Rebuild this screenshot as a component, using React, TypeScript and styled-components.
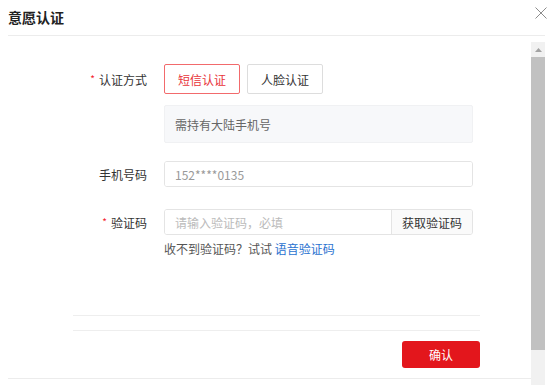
import React from 'react';
import styled, { createGlobalStyle } from 'styled-components';

const GlobalStyle = createGlobalStyle`
  html, body {
    margin: 0;
    padding: 0;
    background: #ffffff;
    overflow: hidden;
  }
  body {
    font-family: "Noto Sans CJK SC", "Noto Sans", sans-serif;
    font-size: 12px;
    color: #333333;
  }
`;

// Dialog shell
const Dialog = styled.div`
  width: 545px;
  height: 385px;
  padding-left: 8px;
  box-sizing: border-box;
  display: flex;
  flex-direction: column;
`;

const Header = styled.div`
  height: 35px;
  flex: none;
  display: flex;
  align-items: center;
  justify-content: space-between;
  border-bottom: 1px solid #ececec;
`;

const Title = styled.h3`
  margin: -1px 0 0;
  font-size: 14px;
  font-weight: 700;
  color: #222222;
  line-height: 20px;
`;

const CloseButton = styled.button`
  border: 0;
  background: none;
  padding: 0;
  margin: -10px -2px 0 0;
  width: 12px;
  height: 12px;
  display: flex;
  cursor: pointer;
`;

// Body with its scrollbar column
const Body = styled.div`
  margin-top: 6px;
  flex: 1;
  min-height: 0;
  display: flex;
  overflow: hidden;
`;

const Scroller = styled.div`
  flex: 1;
  min-width: 0;
`;

const ScrollBar = styled.div`
  width: 14px;
  flex: none;
  background: #f1f1f1;
  display: flex;
  flex-direction: column;
`;

const ScrollArrow = styled.div`
  height: 15px;
  flex: none;
  display: flex;
  align-items: center;
  justify-content: center;
`;

const ScrollThumb = styled.div`
  height: 293px;
  flex: none;
  background: #c1c1c1;
`;

const Content = styled.div`
  border-bottom: 1px solid #ececec;
`;

const Form = styled.div`
  padding-top: 22px;
  height: 273px;
  box-sizing: border-box;
  display: flex;
  flex-direction: column;
`;

const Row = styled.div<{ $gap: number }>`
  display: grid;
  grid-template-columns: 139px 309px;
  column-gap: 17px;
  margin-bottom: ${p => p.$gap}px;
`;

const Label = styled.div<{ $h: number }>`
  height: ${p => p.$h}px;
  display: flex;
  align-items: center;
  justify-content: flex-end;
  color: #333333;
`;

const Star = styled.span`
  color: #f5222d;
  font-size: 10px;
  margin-right: 4px;
  position: relative;
  top: -1px;
`;

const Control = styled.div`
  display: flex;
  flex-direction: column;
`;

const MethodGroup = styled.div`
  display: flex;
  gap: 7px;
`;

const MethodButton = styled.button<{ $active?: boolean }>`
  width: 76px;
  height: 30px;
  box-sizing: border-box;
  border: 1px solid ${p => (p.$active ? '#f26a6c' : '#dddddd')};
  border-radius: 2px;
  background: #ffffff;
  color: ${p => (p.$active ? '#e8343a' : '#333333')};
  font-family: inherit;
  font-size: 12px;
  padding: 0;
  cursor: pointer;
`;

const InfoBox = styled.div`
  margin-top: 11px;
  height: 38px;
  box-sizing: border-box;
  border: 1px solid #f0f1f3;
  border-radius: 2px;
  background: #f7f8fa;
  color: #666666;
  padding-left: 10px;
  display: flex;
  align-items: center;
`;

const InputBox = styled.div`
  height: 26px;
  box-sizing: border-box;
  border: 1px solid #e4e4e4;
  border-radius: 3px;
  display: flex;
  overflow: hidden;
`;

const Input = styled.input`
  flex: 1;
  min-width: 0;
  border: 0;
  outline: none;
  padding: 0 10px;
  font-family: inherit;
  font-size: 12px;
  color: #999999;
  background: #ffffff;

  &::placeholder {
    color: #bbbbbb;
  }
`;

const AddonButton = styled.button`
  width: 81px;
  flex: none;
  border: 0;
  border-left: 1px solid #e4e4e4;
  background: #fafafa;
  color: #333333;
  font-family: inherit;
  font-size: 12px;
  padding: 0;
  cursor: pointer;
`;

const Hint = styled.div`
  margin-top: 5px;
  color: #555555;
  line-height: 17px;
`;

const HintLink = styled.a`
  color: #2a72d0;
  text-decoration: none;
  cursor: pointer;
`;

// Footer
const Divider = styled.div`
  margin: 0 51px 0 65px;
  border-top: 1px solid #eeeeee;
  height: 14px;
`;

const Footer = styled.div`
  margin: 0 51px 0 65px;
  border-top: 1px solid #eeeeee;
  padding: 10px 0;
  display: flex;
  justify-content: flex-end;
`;

const ConfirmButton = styled.button`
  width: 78px;
  height: 27px;
  border: 0;
  border-radius: 3px;
  background: #e3161c;
  color: #ffffff;
  font-family: inherit;
  font-size: 12px;
  padding: 0;
  cursor: pointer;
`;

const CloseIcon = () => (
  <svg width="12" height="12" viewBox="0 0 12 12">
    <path d="M0.5 0.5 L11.5 11.5 M11.5 0.5 L0.5 11.5" stroke="#8c8c8c" strokeWidth="1" fill="none" />
  </svg>
);

const UpArrow = () => (
  <svg width="7" height="4" viewBox="0 0 7 4">
    <path d="M0 4 L3.5 0 L7 4 Z" fill="#a3a3a3" />
  </svg>
);

const App: React.FC = () => {
  return (
    <>
      <GlobalStyle />
      <Dialog>
        <Header>
          <Title>意愿认证</Title>
          <CloseButton aria-label="关闭">
            <CloseIcon />
          </CloseButton>
        </Header>
        <Body>
          <Scroller>
            <Content>
              <Form>
                <Row $gap={18}>
                  <Label $h={30}>
                    <Star>*</Star>认证方式
                  </Label>
                  <Control>
                    <MethodGroup>
                      <MethodButton $active>短信认证</MethodButton>
                      <MethodButton>人脸认证</MethodButton>
                    </MethodGroup>
                    <InfoBox>需持有大陆手机号</InfoBox>
                  </Control>
                </Row>
                <Row $gap={22}>
                  <Label $h={26}>手机号码</Label>
                  <InputBox>
                    <Input value="152****0135" readOnly />
                  </InputBox>
                </Row>
                <Row $gap={0}>
                  <Label $h={26}>
                    <Star>*</Star>验证码
                  </Label>
                  <Control>
                    <InputBox>
                      <Input placeholder="请输入验证码，必填" />
                      <AddonButton>获取验证码</AddonButton>
                    </InputBox>
                    <Hint>
                      收不到验证码？试试 <HintLink>语音验证码</HintLink>
                    </Hint>
                  </Control>
                </Row>
              </Form>
              <Divider />
              <Footer>
                <ConfirmButton>确认</ConfirmButton>
              </Footer>
            </Content>
          </Scroller>
          <ScrollBar>
            <ScrollArrow>
              <UpArrow />
            </ScrollArrow>
            <ScrollThumb />
          </ScrollBar>
        </Body>
      </Dialog>
    </>
  );
};

export default App;
